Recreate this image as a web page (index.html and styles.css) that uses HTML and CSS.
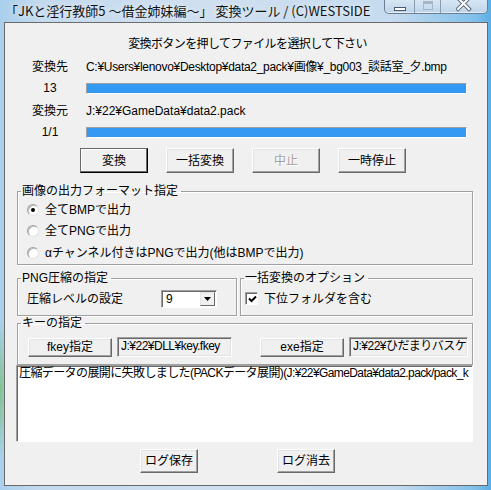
FILE: index.html
```html
<!DOCTYPE html>
<html lang="ja">
<head>
<meta charset="utf-8">
<title>変換ツール</title>
<link rel="stylesheet" href="styles.css">
</head>
<body>
<div class="titlebar">
  <div class="title">「JKと淫行教師5 ～借金姉妹編～」 変換ツール / (C)WESTSIDE</div>
  <div class="caption-btns">
    <div class="cb cb-min"><span class="min-bar"></span></div>
    <div class="cb cb-max"><span class="max-box"></span></div>
    <div class="cb cb-close">
      <svg width="16" height="12" viewBox="0 0 16 12">
        <path d="M2 -2 L13 9 M13 -2 L2 9" stroke="#5d6b7a" stroke-width="4" stroke-linecap="square"/>
        <path d="M2 -2 L13 9 M13 -2 L2 9" stroke="#ffffff" stroke-width="2" stroke-linecap="square"/>
      </svg>
    </div>
  </div>
</div>
<div class="client">
  <div class="instr">変換ボタンを押してファイルを選択して下さい</div>
  <div class="row row-text"><span class="lbl">変換先</span><span class="val val-long">C:¥Users¥lenovo¥Desktop¥data2_pack¥画像¥_bg003_談話室_夕.bmp</span></div>
  <div class="row row-bar"><span class="lbl">13</span><div class="bar"><div class="fill"></div></div></div>
  <div class="row row-text"><span class="lbl">変換元</span><span class="val">J:¥22¥GameData¥data2.pack</span></div>
  <div class="row row-bar"><span class="lbl">1/1</span><div class="bar"><div class="fill"></div></div></div>
  <div class="btn-row">
    <button class="btn btn-default">変換</button>
    <button class="btn">一括変換</button>
    <button class="btn" disabled>中止</button>
    <button class="btn">一時停止</button>
  </div>
  <fieldset class="group g-format">
    <legend>画像の出力フォーマット指定</legend>
    <div class="radio-row r-1"><span class="radio checked"></span><span>全てBMPで出力</span></div>
    <div class="radio-row r-2"><span class="radio"></span><span>全てPNGで出力</span></div>
    <div class="radio-row r-3"><span class="radio"></span><span>αチャンネル付きはPNGで出力(他はBMPで出力)</span></div>
  </fieldset>
  <div class="pair">
    <fieldset class="group g-png">
      <legend>PNG圧縮の指定</legend>
      <div class="png-row">
        <span class="png-lbl">圧縮レベルの設定</span>
        <div class="combo"><span class="combo-val">9</span><span class="combo-btn"><svg width="7" height="4" viewBox="0 0 7 4"><path d="M0 0 H7 L3.5 4 Z" fill="#000"/></svg></span></div>
      </div>
    </fieldset>
    <fieldset class="group g-opt">
      <legend>一括変換のオプション</legend>
      <div class="chk-row">
        <span class="chk"><svg width="9" height="9" viewBox="0 0 9 9"><path d="M1 3.5 L3.5 6 L8 1.5" fill="none" stroke="#000" stroke-width="2"/></svg></span>
        <span>下位フォルダを含む</span>
      </div>
    </fieldset>
  </div>
  <fieldset class="group g-key">
    <legend>キーの指定</legend>
    <div class="key-row">
      <button class="btn btn-key">fkey指定</button>
      <div class="field f-fkey">J:¥22¥DLL¥key.fkey</div>
      <button class="btn btn-key btn-exe">exe指定</button>
      <div class="field f-exe">J:¥22¥ひだまりバスケ</div>
    </div>
  </fieldset>
  <div class="log">圧縮データの展開に失敗しました(PACKデータ展開)(J:¥22¥GameData¥data2.pack/pack_k</div>
  <div class="log-btns">
    <button class="btn btn-log">ログ保存</button>
    <button class="btn btn-log btn-log2">ログ消去</button>
  </div>
</div>
</body>
</html>
```

FILE: styles.css
```css
* { box-sizing: border-box; }
html, body { margin: 0; padding: 0; }
body {
  width: 491px;
  height: 490px;
  overflow: hidden;
  font-family: "Liberation Sans", "Noto Sans CJK JP", sans-serif;
  font-size: 12px;
  color: #000;
  background:
    radial-gradient(ellipse 10px 70px at 0 390px, rgba(120, 190, 120, 0.8), rgba(120, 190, 120, 0) 100%),
    linear-gradient(to right, #a9d0ec 0%, #c3d9ee 8%, #cfdfef 40%, #c6dbef 80%, #7fbfea 97%, #5aaee6 100%);
}

/* title bar */
.titlebar {
  height: 22px;
  display: flex;
  justify-content: space-between;
  align-items: flex-start;
}
.title {
  padding-left: 5px;
  font-family: "Noto Sans CJK JP", "Liberation Sans", sans-serif;
  font-size: 13px;
  line-height: 21px;
  color: #111;
  white-space: nowrap;
  text-shadow: 0 0 6px rgba(255, 255, 255, 0.9);
}
.caption-btns {
  display: flex;
  margin-top: -6px;
  margin-right: 3px;
  height: 20px;
  border: 1px solid #6b7f94;
  border-top: none;
  border-radius: 0 0 5px 5px;
  overflow: hidden;
  background: linear-gradient(#e2edf7, #cddff0 60%, #bcd3ea);
  box-shadow: inset 0 -1px 0 rgba(255, 255, 255, 0.6);
}
.cb {
  display: flex;
  align-items: center;
  justify-content: center;
  padding-top: 4px;
}
.cb + .cb { border-left: 1px solid #8a9cb0; }
.cb-min { width: 29px; }
.cb-max { width: 26px; }
.cb-close { width: 47px; }
.min-bar {
  display: block;
  width: 12px;
  height: 4px;
  margin-top: 6px;
  background: #fff;
  border: 1px solid #4c5a6a;
}
.max-box {
  display: block;
  width: 10px;
  height: 9px;
  margin-top: -1px;
  border: 1px solid #9aaabb;
  border-top-width: 3px;
  opacity: 0.8;
}

/* client area */
.client {
  margin-left: 4px;
  width: 484px;
  height: 464px;
  border: 1px solid #6a6a6a;
  background: #f0f0f0;
  overflow: hidden;
}
.instr {
  margin-top: 13px;
  height: 16px;
  line-height: 16px;
  text-align: center;
  padding-left: 3px;
  letter-spacing: -0.6px;
}
.row {
  display: flex;
  align-items: flex-start;
  height: 16px;
  line-height: 16px;
}
.row-text { margin-top: 7px; }
.row-bar { margin-top: 5px; }
.lbl {
  margin-left: 20px;
  width: 50px;
  text-align: center;
}
.val {
  margin-left: 11px;
  white-space: nowrap;
}
.val-long { letter-spacing: -0.3px; }
.bar {
  margin-left: 11px;
  margin-top: 3px;
  width: 381px;
  height: 11px;
  border: 1px solid;
  border-color: #a0a0a0 #ffffff #ffffff #a0a0a0;
  background: #f0f0f0;
}
.fill { height: 100%; background: #3399f3; }

/* buttons */
.btn {
  font-family: inherit;
  font-size: 12px;
  color: #000;
  padding: 0;
  margin: 0;
  background: #f0f0f0;
  border: 1px solid;
  border-color: #ffffff #696969 #696969 #ffffff;
  box-shadow: inset -1px -1px 0 #a0a0a0, inset 1px 1px 0 #e3e3e3;
  line-height: 16px;
}
.btn:disabled {
  color: #a0a0a0;
  text-shadow: 1px 1px 0 #fff;
}
.btn-row {
  display: flex;
  gap: 18px;
  margin-top: 8px;
  padding-left: 75px;
}
.btn-row .btn { width: 68px; height: 25px; }
.btn-default {
  border-color: #696969 #000 #000 #696969;
  box-shadow: inset -1px -1px 0 #696969, inset 1px 1px 0 #fff;
}

/* group boxes */
.group {
  margin: 0;
  padding: 0;
  min-width: 0;
  border: 1px solid #a0a0a0;
  box-shadow: inset 1px 1px 0 #fff, 1px 1px 0 #fff;
}
.group legend {
  margin-left: 3px;
  padding: 0 3px 0 1px;
  height: 14px;
  line-height: 14px;
  white-space: nowrap;
}
.g-format {
  margin-top: 11px;
  margin-left: 12px;
  width: 456px;
  padding-bottom: 3px;
}
.radio-row {
  display: flex;
  align-items: center;
  height: 16px;
  line-height: 16px;
  padding-left: 9px;
  gap: 6px;
}
.r-1 { margin-top: 4px; }
.r-2 { margin-top: 5px; }
.r-3 { margin-top: 6px; }
.radio {
  display: block;
  flex: none;
  width: 12px;
  height: 12px;
  border-radius: 50%;
  background: #fff;
  border: 1px solid;
  border-color: #a0a0a0 #e3e3e3 #e3e3e3 #a0a0a0;
  box-shadow: inset 1px 1px 0 #bdbdbd;
  position: relative;
}
.radio.checked::after {
  content: "";
  position: absolute;
  left: 3px;
  top: 3px;
  width: 4px;
  height: 4px;
  border-radius: 50%;
  background: #000;
}

.pair {
  display: flex;
  gap: 3px;
  margin-top: 6px;
  margin-left: 12px;
}
.g-png { width: 220px; padding-bottom: 8px; }
.g-opt { width: 233px; padding-bottom: 8px; }
.png-row {
  display: flex;
  align-items: center;
  margin-top: 5px;
  height: 17px;
  padding-left: 9px;
}
.png-lbl { width: 134px; line-height: 16px; }
.combo {
  display: flex;
  width: 56px;
  height: 18px;
  background: #fff;
  border: 1px solid;
  border-color: #a0a0a0 #fff #fff #a0a0a0;
  box-shadow: inset 1px 1px 0 #696969;
  padding: 1px 1px 1px 2px;
}
.combo-val { flex: 1; line-height: 15px; padding-left: 2px; }
.combo-btn {
  width: 15px;
  display: flex;
  align-items: center;
  justify-content: center;
  background: #f0f0f0;
  border: 1px solid;
  border-color: #e3e3e3 #696969 #696969 #e3e3e3;
}
.chk-row {
  display: flex;
  align-items: center;
  gap: 6px;
  margin-top: 5px;
  height: 17px;
  padding-left: 4px;
  line-height: 16px;
}
.chk {
  display: flex;
  align-items: center;
  justify-content: center;
  width: 13px;
  height: 13px;
  background: #fff;
  border: 1px solid;
  border-color: #a0a0a0 #fff #fff #a0a0a0;
  box-shadow: inset 1px 1px 0 #696969;
  padding: 1px 0 0 1px;
}

.g-key {
  margin-left: 12px;
  width: 456px;
  padding-bottom: 7px;
}
.key-row {
  display: flex;
  align-items: center;
  margin-top: 7px;
  height: 20px;
  padding-left: 10px;
}
.btn-key { width: 84px; height: 19px; }
.btn-exe { margin-left: 28px; }
.field {
  margin-left: 5px;
  height: 20px;
  padding: 0 3px;
  line-height: 17px;
  white-space: nowrap;
  overflow: hidden;
  border: 1px solid;
  border-color: #a0a0a0 #fff #fff #a0a0a0;
  box-shadow: inset 1px 1px 0 #696969, inset -1px -1px 0 #e3e3e3;
  letter-spacing: -0.5px;
}
.f-fkey { width: 115px; }
.f-exe { width: 119px; }

.log {
  margin-top: 0;
  margin-left: 11px;
  width: 457px;
  height: 77px;
  background: #fff;
  border: 1px solid;
  border-color: #a0a0a0 #fff #fff #a0a0a0;
  box-shadow: inset 1px 1px 0 #696969;
  padding: 0 2px;
  line-height: 14px;
  white-space: nowrap;
  overflow: hidden;
  letter-spacing: -0.6px;
}
.log-btns {
  display: flex;
  margin-top: 7px;
  padding-left: 135px;
  gap: 79px;
}
.btn-log { width: 58px; height: 24px; }
```
